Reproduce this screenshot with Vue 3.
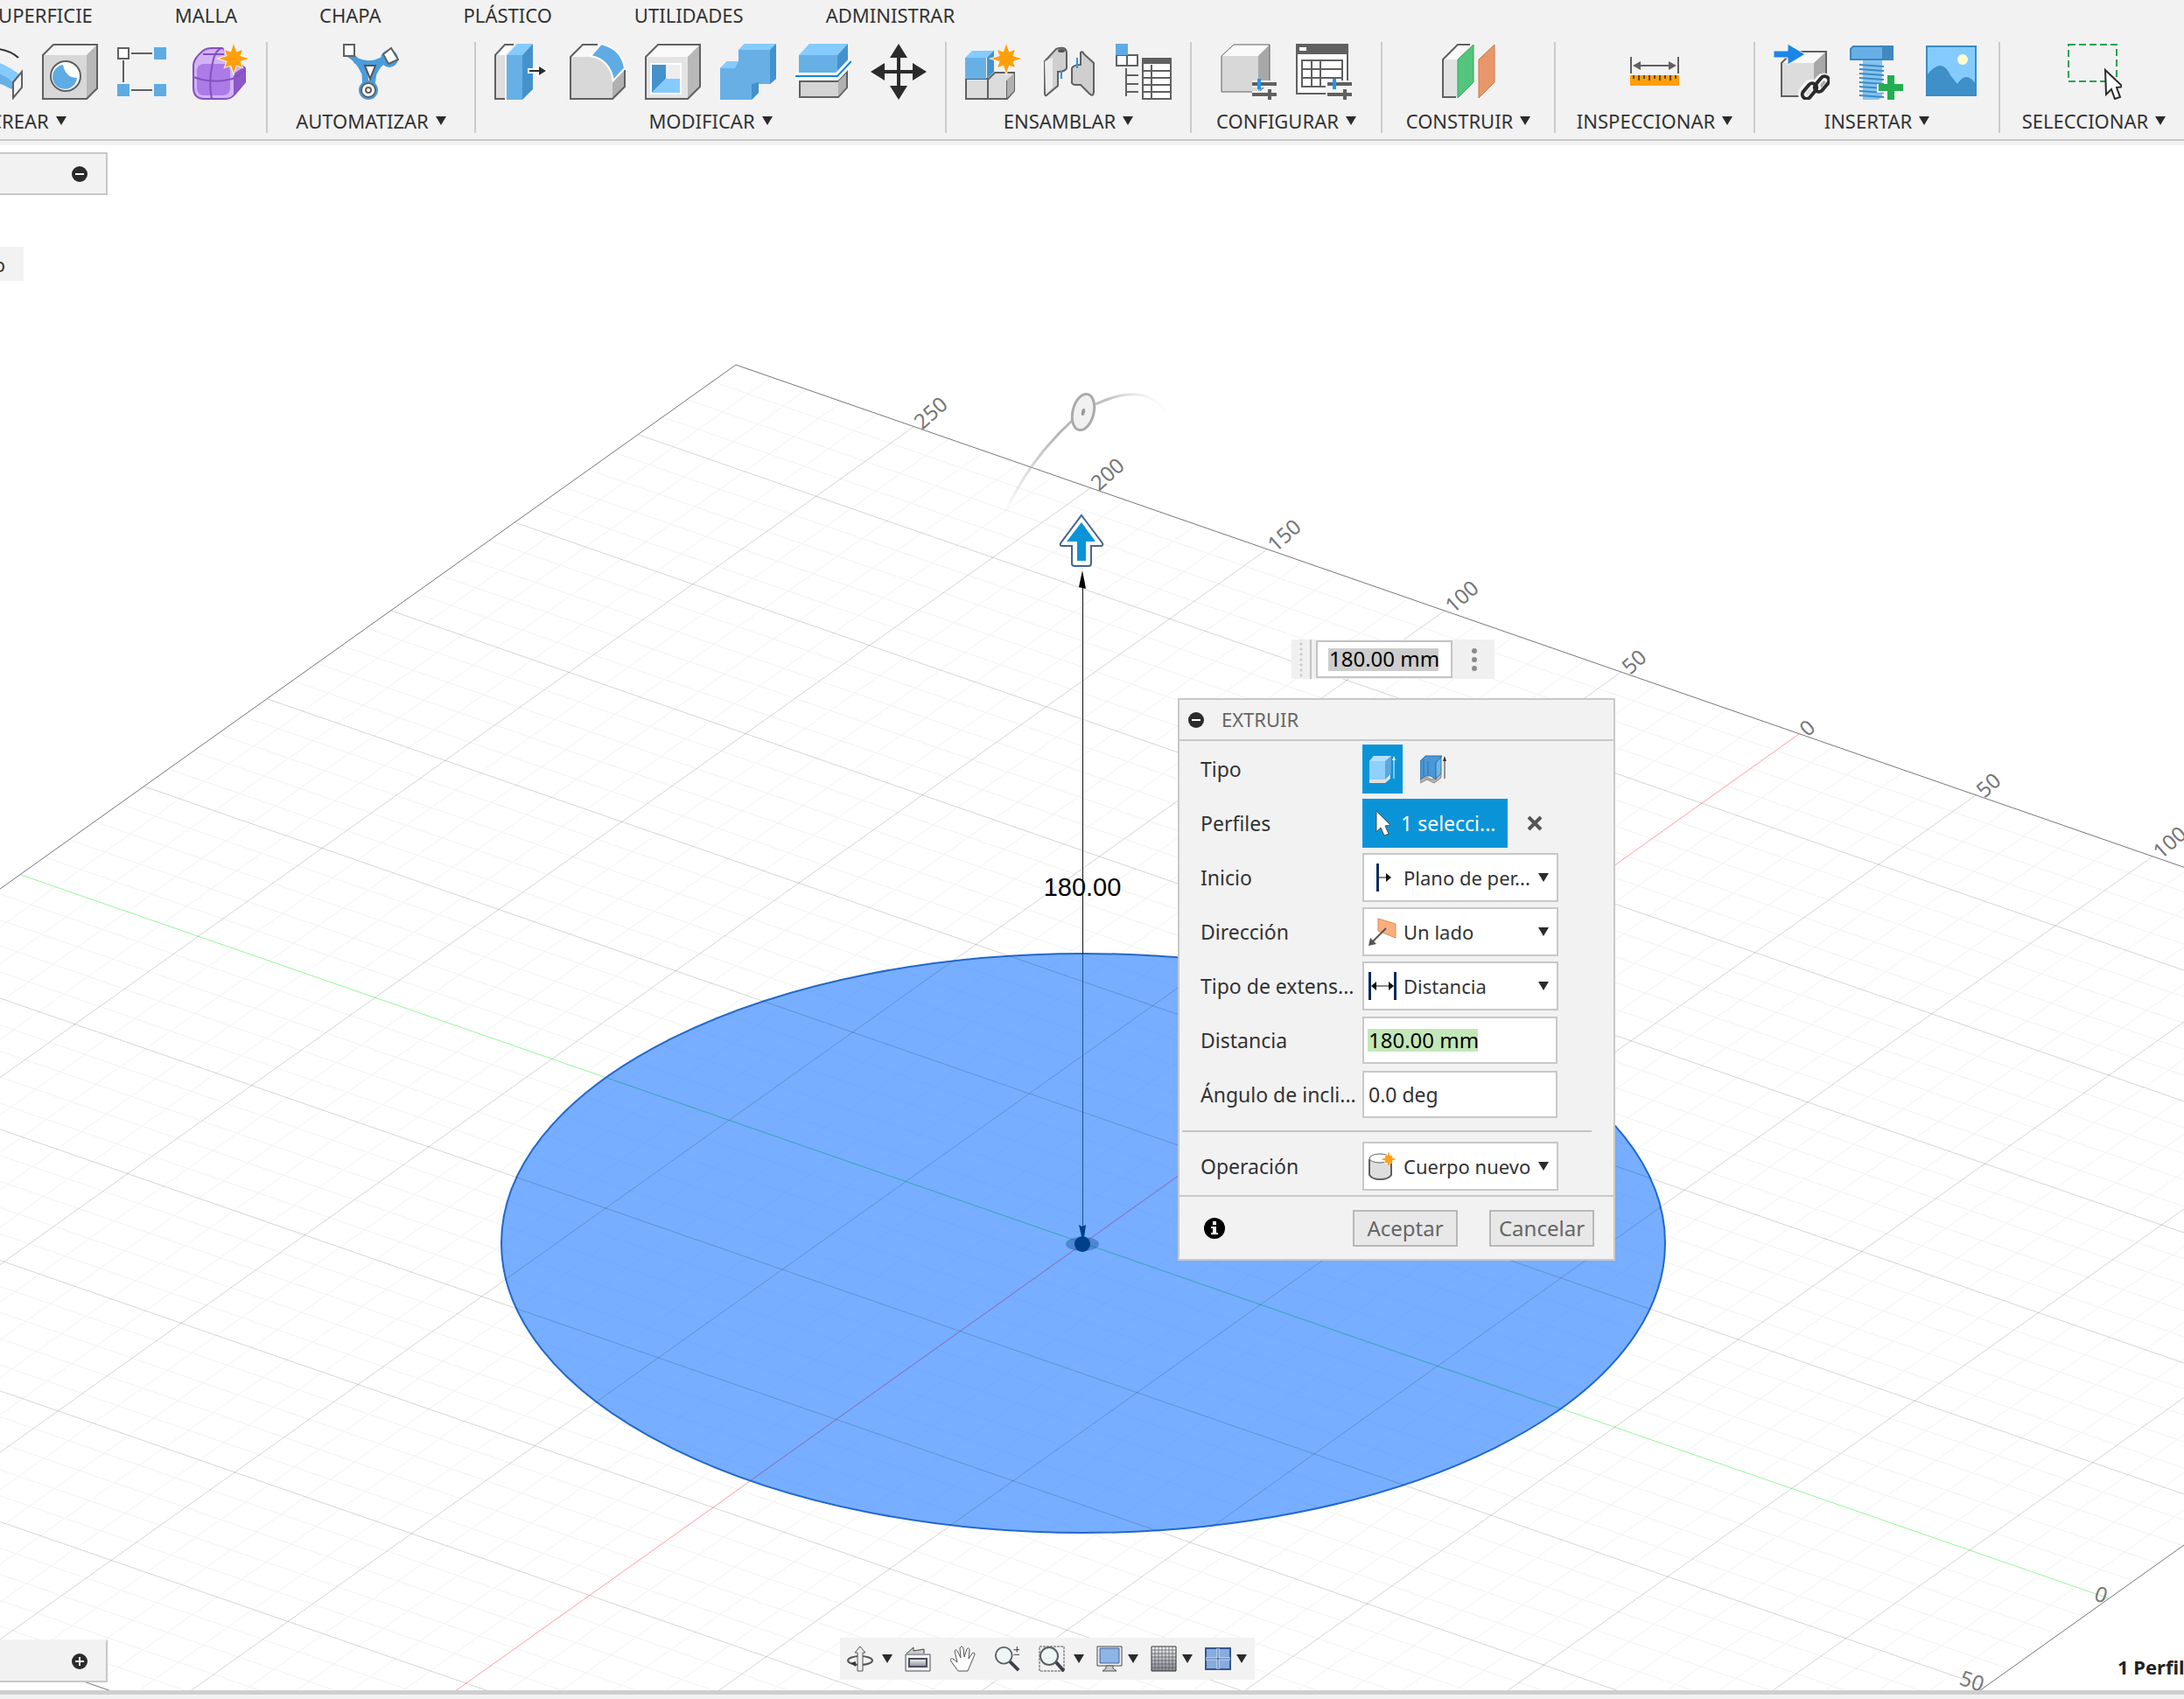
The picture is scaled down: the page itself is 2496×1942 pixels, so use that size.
<template>
    <div class="app">
        <svg class="sprites" aria-hidden="true">
            <defs>
                <linearGradient id="arcFade" gradientUnits="userSpaceOnUse" x1="1147" y1="420" x2="1334" y2="300">
                    <stop offset="0" stop-color="#bbb" stop-opacity="0" />
                    <stop offset="0.45" stop-color="#b4b4b4" />
                    <stop offset="0.75" stop-color="#c0c0c0" />
                    <stop offset="1" stop-color="#ccc" stop-opacity="0" />
                </linearGradient>
                <linearGradient id="steel" x1="0" y1="0" x2="0" y2="1">
                    <stop offset="0" stop-color="#f4f5f8" />
                    <stop offset="1" stop-color="#888c99" />
                </linearGradient>
            </defs>

            <symbol id="i-revolve" viewBox="0 0 64 64">
                <path d="M20 20Q40 18 63 38L51 52Q36 42 20 44Z" fill="#67b0e6" />
                <path d="M20 20Q40 18 63 38L54 45Q40 32 20 30Z" fill="#85cbff" />
                <path d="M36 6Q50 8 59 16" fill="none" stroke="#333" stroke-width="2" />
                <path d="M53 44L63 32V50L53 62Z" fill="#f4f4f4" stroke="#606060" stroke-width="2" />
            </symbol>
            <symbol id="i-hole" viewBox="0 0 64 64">
                <path d="M1 13L13 1H63V51L51 63H1Z" fill="#d8d8d8" />
                <path d="M1 13L13 1H63L51 13Z" fill="#f6f6f6" />
                <path d="M51 13L63 1V51L51 63Z" fill="#b8b8b8" />
                <path d="M1 13L13 1H63V51L51 63H1Z" fill="none" stroke="#606060" stroke-width="2" />
                <circle cx="27" cy="37" r="17" fill="#fff" stroke="#606060" stroke-width="2" />
                <path d="M24 24A14 14 0 1 0 40 39Q27 39 24 24Z" fill="#5fabe4" />
            </symbol>
            <symbol id="i-pattern" viewBox="0 0 64 64">
                <path d="M16 11H40M7 19V44M16 53H40" stroke="#606060" stroke-width="2" />
                <rect x="1" y="5" width="12" height="12" fill="#fff" stroke="#606060" stroke-width="2" />
                <path d="M42 4H56V18H42ZM0 46H14V60H0ZM42 46H56V60H42Z" fill="#5fabe4" />
            </symbol>
            <symbol id="i-form" viewBox="0 0 64 64">
                <path d="M1 24Q2 16 12 8Q16 5 22 5H34L60 28V44L48 58Q44 63 38 63H12Q1 62 1 50Z" fill="#d2b2f7" stroke="#8450c0" stroke-width="2" />
                <path d="M47 34L60 26V44L47 58Z" fill="#8c58c8" />
                <rect x="5" y="23" width="38" height="36" rx="8" fill="#ac7be8" />
                <path d="M22 63Q18 44 23 22Q25 8 33 5M1 38Q22 46 46 40L60 30M12 12H36" fill="none" stroke="#8450c0" stroke-width="2" />
                <polygon :points="star(47, 17, 17, 8)" fill="#ff9f0a" stroke="#f5f5f5" stroke-width="2" paint-order="stroke" />
            </symbol>
            <symbol id="i-automate" viewBox="0 0 64 64">
                <path d="M5 11Q18 18 25 34L26 52M53 15Q40 22 35 34L32 52M14 19Q30 27 46 18" fill="none" stroke="#4a9cdc" stroke-width="7" />
                <path d="M25 25H37L31 40Z" fill="#fff" stroke="#555" stroke-width="2" />
                <circle cx="53" cy="17" r="10" fill="#4a9cdc" />
                <path d="M1 1H13V14H1ZM46 12L55 5L63 18L52 23Z" fill="#fff" stroke="#606060" stroke-width="2" />
                <circle cx="29" cy="53" r="11" fill="#4a9cdc" />
                <circle cx="29" cy="53" r="8" fill="#fff" stroke="#606060" stroke-width="2" />
                <circle cx="29" cy="53" r="3" fill="#fff" stroke="#606060" stroke-width="2" />
            </symbol>
            <symbol id="i-press" viewBox="0 0 64 64">
                <path d="M1 13L12 1H22L12 13V63H1Z" fill="#ddd" />
                <path d="M1 13L12 1H22L12 13Z" fill="#fff" />
                <path d="M22 1H12L1 13V63H12" fill="none" stroke="#606060" stroke-width="2" />
                <path d="M14 13H32V64H14Z" fill="#67b0e6" />
                <path d="M14 13L26 0H44L32 13Z" fill="#85cbff" />
                <path d="M32 13L44 0V52L32 64Z" fill="#4492cc" />
                <path d="M38 28H49V24L62 31L49 38V34H38Z" fill="#fff" />
                <path d="M40 30H51V26L59 31L51 36V32H40Z" fill="#2b2b2b" />
            </symbol>
            <symbol id="i-fillet" viewBox="0 0 64 64">
                <path d="M1 15L15 1H34L24 15Z" fill="#f8f8f8" />
                <path d="M1 15H24Q48 18 49 46V63H1Z" fill="#d8d8d8" />
                <path d="M49 44L63 30V49L49 63Z" fill="#b0b0b0" />
                <path d="M32 1H15L1 15V63H49L63 49V30" fill="none" stroke="#606060" stroke-width="2" />
                <path d="M24 14L36 0Q60 6 63 28L50 42Q46 18 24 14Z" fill="#5fabe4" stroke="#fff" stroke-width="2" />
            </symbol>
            <symbol id="i-shell" viewBox="0 0 64 64">
                <path d="M1 15L15 1H63V49L49 63H1Z" fill="#e4e4e4" />
                <path d="M1 15L15 1H63L49 15Z" fill="#fafafa" />
                <path d="M49 15L63 1V49L49 63Z" fill="#b8b8b8" />
                <path d="M1 15L15 1H63V49L49 63H1Z" fill="none" stroke="#606060" stroke-width="2" />
                <path d="M6 22H42V58H6Z" fill="#fff" />
                <path d="M24 24H40V40H24Z" fill="#eee" />
                <path d="M8 24H24V40L8 56Z" fill="#4492cc" />
                <path d="M24 40H40V56H8Z" fill="#85cbff" />
            </symbol>
            <symbol id="i-combine" viewBox="0 0 64 64">
                <path d="M0 28L8 20H21V7L28 0H64V40L57 46H44V56L36 64H0Z" fill="#67b0e6" />
                <path d="M0 28L8 20H21L17 28ZM21 7L28 0H64L57 7Z" fill="#85cbff" />
                <path d="M57 7L64 0V40L57 46ZM36 46L44 44V56L36 64Z" fill="#4492cc" />
            </symbol>
            <symbol id="i-split" viewBox="0 0 64 64">
                <path d="M4 13H48V34H4Z" fill="#67b0e6" />
                <path d="M4 13L16 0H60L48 13Z" fill="#85cbff" />
                <path d="M48 13L60 0V20L48 34Z" fill="#4492cc" />
                <path d="M5 43H49L59 32V50L49 61H5Z" fill="#d4d4d4" stroke="#606060" stroke-width="2" />
                <path d="M49 43L58 34V50L49 60Z" fill="#b0b0b0" />
                <path d="M0 37H48L64 20" fill="none" stroke="#fff" stroke-width="8" />
                <path d="M0 37H48L64 20" fill="none" stroke="#0f84e0" stroke-width="2" />
            </symbol>
            <symbol id="i-move" viewBox="0 0 64 64">
                <path d="M32 0L42 16H34V30H48V22L64 32L48 42V34H34V48H42L32 64L22 48H30V34H16V42L0 32L16 22V30H30V16H22Z" fill="#2b2b2b" />
            </symbol>
            <symbol id="i-component" viewBox="0 0 64 64">
                <path d="M1 40H27L34 33H56V54L48 63H1Z" fill="#dcdcdc" stroke="#606060" stroke-width="2" />
                <path d="M26 40V63M48 42V62" stroke="#606060" stroke-width="2" />
                <path d="M48 41L56 34V54L48 62Z" fill="#b0b0b0" />
                <path d="M0 16H24V40H0Z" fill="#67b0e6" />
                <path d="M0 16L8 8H34L26 16Z" fill="#85cbff" />
                <path d="M25 16L33 8V32L25 40Z" fill="#4492cc" />
                <polygon :points="star(47, 17, 17, 8)" fill="#ff9f0a" stroke="#f5f5f5" stroke-width="2" paint-order="stroke" />
            </symbol>
            <symbol id="i-joint" viewBox="0 0 64 64">
                <path d="M5 20L18 6Q29 2 30 10V28Q28 32 20 32V48L7 59Q5 60 5 56Z" fill="#cfcfcf" stroke="#606060" stroke-width="2" />
                <path d="M5 20L14 16V50L6 58Z" fill="#ededed" />
                <ellipse cx="24" cy="8" rx="4" ry="2" fill="#555" />
                <path d="M46 10Q48 8 50 12L61 22V56Q60 61 56 57L46 47H39Q35 46 36 42V28Q38 24 46 24Z" fill="#cfcfcf" stroke="#606060" stroke-width="2" />
                <path d="M24 31V40M42 16V28" stroke="#2196f3" stroke-width="2" />
            </symbol>
            <symbol id="i-bom" viewBox="0 0 64 64">
                <path d="M1 13H25V25H1ZM13 13V25M12 28V60M12 36H26M12 46H26M12 55H26" fill="#fff" stroke="#606060" stroke-width="2" />
                <path d="M0 0H14V13H0Z" fill="#5fabe4" />
                <path d="M31 17H63V63H31Z" fill="#fff" stroke="#606060" stroke-width="2" />
                <path d="M31 17H63V23H31Z" fill="#606060" />
                <path d="M31 31H63M31 39H63M31 47H63M31 55H63M41 24V63" stroke="#606060" stroke-width="2" />
            </symbol>
            <symbol id="i-config" viewBox="0 0 64 64">
                <path d="M1 14L15 1H56V44L44 55H1Z" fill="#d8d8d8" />
                <path d="M1 14L15 1H56L43 14Z" fill="#fafafa" />
                <path d="M43 14L56 1V44L43 55Z" fill="#a8a8a8" />
                <path d="M1 14L15 1H56V44L44 55H1Z" fill="none" stroke="#606060" stroke-width="1" />
                <path d="M36 46H64M36 58H64" stroke="#f4f4f4" stroke-width="8" />
                <path d="M36 46H64M36 58H64M56 52V64" stroke="#606060" stroke-width="4" />
                <path d="M44 40V52" stroke="#2196f3" stroke-width="4" />
            </symbol>
            <symbol id="i-config-table" viewBox="0 0 64 64">
                <path d="M1 1H59V57H1Z" fill="#fff" stroke="#606060" stroke-width="2" />
                <path d="M0 0H60V12H0Z" fill="#606060" />
                <path d="M4 4H12V8H4Z" fill="#fff" />
                <path d="M7 19H53V49H7ZM7 29H53M7 39H53M18 19V49M28 19V49" fill="none" stroke="#606060" stroke-width="2" />
                <path d="M34 42H64V62H34Z" fill="#f4f4f4" />
                <path d="M36 46H64M36 58H64M56 52V64" stroke="#606060" stroke-width="4" />
                <path d="M44 40V52" stroke="#2196f3" stroke-width="4" />
            </symbol>
            <symbol id="i-plane" viewBox="0 0 64 64">
                <path d="M3 18L20 1H34L20 18V61H3Z" fill="#e2e2e2" />
                <path d="M3 18L20 1H34L20 18Z" fill="#fafafa" />
                <path d="M34 1H20L3 18V61H18" fill="none" stroke="#606060" stroke-width="2" />
                <path d="M20 18L38 1V44L20 62Z" fill="#55c47c" stroke="#2fa85a" stroke-width="1" />
                <path d="M44 18L62 1V44L44 62Z" fill="#e8976a" stroke="#d17840" stroke-width="1" />
            </symbol>
            <symbol id="i-measure" viewBox="0 0 64 64">
                <path d="M5 15V34M59 15V34M10 25H54" stroke="#606060" stroke-width="2" />
                <path d="M7 25L16 20V30ZM57 25L48 20V30Z" fill="#606060" />
                <path d="M4 36H60V48H4Z" fill="#ff9f0a" />
                <path d="M8 36V40M14 36V42M20 36V40M26 36V42M32 36V40M38 36V42M44 36V40M50 36V42M56 36V40" stroke="#5a4630" stroke-width="2" />
            </symbol>
            <symbol id="i-derive" viewBox="0 0 64 64">
                <path d="M9 22L22 9H60V46L46 60H9Z" fill="#dcdcdc" />
                <path d="M9 22L22 9H60L46 22Z" fill="#fafafa" />
                <path d="M46 22L60 9V46L46 60Z" fill="#a8a8a8" />
                <path d="M9 22L22 9H60V46L46 60H9Z" fill="none" stroke="#606060" stroke-width="2" />
                <path d="M0 8H16V0L36 12L16 24V16H0Z" fill="#1a86e8" stroke="#f4f4f4" stroke-width="1" />
                <g fill="none" stroke-linecap="round">
                    <rect x="-6" y="-10" width="12" height="20" rx="6" transform="translate(55 47) rotate(40)" stroke="#f4f4f4" stroke-width="9" />
                    <rect x="-6" y="-10" width="12" height="20" rx="6" transform="translate(41 54) rotate(40)" stroke="#f4f4f4" stroke-width="9" />
                    <rect x="-5" y="-10" width="10" height="20" rx="5" transform="translate(55 46) rotate(40)" stroke="#2b2b2b" stroke-width="4" />
                    <rect x="-5" y="-10" width="10" height="20" rx="5" transform="translate(41 54) rotate(40)" stroke="#2b2b2b" stroke-width="4" />
                </g>
            </symbol>
            <symbol id="i-bolt" viewBox="0 0 64 64">
                <path d="M16 18H38V60L34 64H16Z" fill="#85c4f2" />
                <path d="M5 3H50V18H2V6Z" fill="#67b0e6" stroke="#3a86be" stroke-width="2" />
                <path d="M38 3H50V18H38Z" fill="#3f88c0" />
                <path d="M12 24L40 26M12 29L40 31M12 34L40 36M12 39L40 41M12 44L40 46M12 49L40 51M12 54L40 56M12 59L40 61" stroke="#3f88c0" stroke-width="2" />
                <path d="M40 36H54V46H64V56H54V64H40V56H32V46H40Z" fill="#f4f4f4" />
                <path d="M44 36H52V46H62V54H52V64H44V54H34V46H44Z" fill="#22ad50" />
            </symbol>
            <symbol id="i-picture" viewBox="0 0 64 64">
                <path d="M3 3H59V59H3Z" fill="#85cbff" />
                <circle cx="44" cy="18" r="6" fill="#ffffcf" />
                <path d="M3 36Q20 14 30 36L38 46Q48 30 59 46V59H3Z" fill="#3f8fc8" />
                <path d="M3 3H59V59H3Z" fill="none" stroke="#3a8ac6" stroke-width="2" />
            </symbol>
            <symbol id="i-select" viewBox="0 0 64 64">
                <rect x="3" y="1" width="55" height="42" fill="none" stroke="#1fa64c" stroke-width="2" stroke-dasharray="8 4" />
                <path d="M45 30L65 49L58 50L62 61L56 63L52 52L46 58Z" fill="#fff" stroke="#2b2b2b" stroke-width="2" />
            </symbol>

            <symbol id="n-orbit" viewBox="0 0 30 30">
                <ellipse cx="15" cy="17" rx="14" ry="5" fill="none" stroke="#555" stroke-width="2" />
                <path d="M15 1L21 8H18V29H12V8H9Z" fill="#eee" stroke="#555" />
                <path d="M4 20L10 18V24Z" fill="#333" />
            </symbol>
            <symbol id="n-look" viewBox="0 0 30 30">
                <path d="M2 9L10 2V6L22 4V9" fill="#ccc" stroke="#444" />
                <path d="M1 10H29V29H1Z" fill="#f1f2f6" stroke="#4b4f5c" stroke-width="1" />
                <path d="M5 15H25V24H5Z" fill="url(#steel)" stroke="#4b4f5c" stroke-width="2" />
            </symbol>
            <symbol id="n-pan" viewBox="0 0 30 30">
                <path d="M10 29L2 18Q0 14 4 15L9 19L6 6Q7 3 9 6L13 14L12 3Q14 -1 16 3L17 13L20 4Q22 1 23 5L22 15L26 9Q29 7 29 10L24 22L21 29Z" fill="#fff" stroke="#555" />
            </symbol>
            <symbol id="n-zoom" viewBox="0 0 32 30">
                <path d="M19 18L30 29" stroke="#3c4048" stroke-width="4" />
                <circle cx="12" cy="11" r="10" fill="#eef6f4" stroke="#5b5f66" stroke-width="2" />
                <path d="M24 4H31M28 0V7M24 10H31" stroke="#333" stroke-width="1" />
            </symbol>
            <symbol id="n-fit" viewBox="0 0 30 30">
                <path d="M1 1H29V29H1Z" fill="none" stroke="#555" stroke-dasharray="3 1" />
                <path d="M19 18L29 29" stroke="#3c4048" stroke-width="4" />
                <circle cx="12" cy="12" r="10" fill="#eef6f4" stroke="#5b5f66" stroke-width="2" />
            </symbol>
            <symbol id="n-display" viewBox="0 0 30 30">
                <path d="M1 1H29V23H1Z" fill="#f4f4f6" stroke="#444" stroke-width="1" />
                <path d="M4 3H26V20H4Z" fill="#8fb4e6" stroke="#3f5e96" stroke-width="1" />
                <path d="M11 23H19V26L23 29H7L11 26Z" fill="#ccc" stroke="#555" />
            </symbol>
            <symbol id="n-grid" viewBox="0 0 30 30">
                <path d="M1 1H29V29H1Z" fill="url(#steel)" stroke="#333" />
                <path d="M5 1V29M9 1V29M13 1V29M17 1V29M21 1V29M25 1V29M1 5H29M1 9H29M1 13H29M1 17H29M1 21H29M1 25H29" stroke="#555" stroke-width="1" stroke-opacity="0.7" />
            </symbol>
            <symbol id="n-views" viewBox="0 0 30 30">
                <path d="M1 3H29V27H1Z" fill="#86ace0" stroke="#35568c" stroke-width="2" />
                <path d="M15 3V27M1 15H29" stroke="#dbe8fa" stroke-width="3" />
                <path d="M15 3V27M1 15H29" stroke="#35568c" stroke-width="1" />
            </symbol>

            <symbol id="p-solid" viewBox="0 0 30 34">
                <path d="M0 27H18L24 22V28L18 33H0Z" fill="#e4e0dc" />
                <path d="M0 8L5 2H25L18 8V29H0Z" fill="#8fd0ff" />
                <path d="M18 8L25 2V22L18 29Z" fill="#5aa8e0" />
                <path d="M0 8L5 2H25L18 8Z" fill="#b4e0ff" />
                <path d="M28 5V28" stroke="#fff" stroke-width="1" />
                <path d="M28 2L30 7H26Z" fill="#fff" />
            </symbol>
            <symbol id="p-thin" viewBox="0 0 30 34">
                <path d="M0 29L6 26L14 29L24 22V27L16 33L8 29L0 33Z" fill="#b9b2ac" stroke="#8d8580" />
                <path d="M0 8L6 2H25L18 10V29L12 25H6L0 29Z" fill="#4b98d6" stroke="#2f74ae" />
                <path d="M4 6V25M9 8V24M18 10L24 3V22L18 28Z" fill="#6eb6ec" stroke="#2f74ae" />
                <path d="M28 6V28" stroke="#333" stroke-width="1" />
                <path d="M28 2L30 8H26Z" fill="#333" />
            </symbol>
            <symbol id="p-cursor" viewBox="0 0 20 30">
                <path d="M2 1L18 17L12 18L16 27L11 29L7 20L2 25Z" fill="#fff" stroke="#5b4a48" stroke-width="1" />
            </symbol>
            <symbol id="p-start" viewBox="0 0 32 32">
                <path d="M9 0H12V32H9Z" fill="#0b2a5c" />
                <path d="M12 16H22" stroke="#111" stroke-width="1" />
                <path d="M20 11L26 16L20 21Z" fill="#111" />
            </symbol>
            <symbol id="p-side" viewBox="0 0 32 32">
                <path d="M11 1L31 7V23L11 15Z" fill="#f7b07c" stroke="#dc8c50" stroke-width="1" />
                <path d="M20 12L3 29" stroke="#555" stroke-width="2" />
                <path d="M0 32L2 23L9 30Z" fill="#555" />
            </symbol>
            <symbol id="p-extent" viewBox="0 0 32 32">
                <path d="M0 0H3V32H0ZM29 0H32V32H29Z" fill="#0b2a5c" />
                <path d="M6 16H26" stroke="#111" stroke-width="1" />
                <path d="M3 16L9 11V21ZM29 16L23 11V21Z" fill="#111" />
            </symbol>
            <symbol id="p-body" viewBox="0 0 32 32">
                <path d="M1 8V26Q4 31 13 31Q23 31 26 26V8" fill="#dedede" stroke="#606060" stroke-width="2" />
                <ellipse cx="13" cy="7" rx="12" ry="5" fill="#fff" stroke="#606060" stroke-width="1" />
                <polygon :points="star(23, 8, 9, 4)" fill="#ffa114" stroke="#fff" stroke-width="1" paint-order="stroke" />
            </symbol>
        </svg>

        <header class="toolbar">
            <nav class="tabs">
                <a v-for="tab in tabs" :key="tab" href="#" class="tab">{{ tab }}</a>
            </nav>
            <div class="groups">
                <section v-for="group in groups" :key="group.label" class="group">
                    <div class="group-icons">
                        <button v-for="icon in group.icons" :key="icon" type="button" class="tool" :aria-label="icon">
                            <svg class="tool-icon"><use :href="'#i-' + icon" /></svg>
                        </button>
                    </div>
                    <button type="button" class="group-label">
                        {{ group.label }}
                        <svg class="caret" viewBox="0 0 12 10"><path d="M0 0H12L6 10Z" /></svg>
                    </button>
                </section>
            </div>
        </header>

        <main class="viewport">
            <svg class="scene">
                <path :d="minorLines" class="line-minor" />
                <path :d="segment(0, MIN, 0, MAX)" class="axis-x" />
                <path :d="segment(MIN, 0, MAX, 0)" class="axis-y" />
                <ellipse cx="1238" cy="1255" rx="665" ry="331" class="profile" />
                <path :d="segment(0, -RADIUS, 0, RADIUS)" class="axis-x axis-inner" />
                <path :d="segment(-RADIUS, 0, RADIUS, 0)" class="axis-y axis-inner" />
                <path :d="majorLines" class="line-major" />
                <path :d="border" class="line-border" />
                <text
                    v-for="mark in marks"
                    :key="mark.id"
                    class="mark"
                    :text-anchor="mark.anchor"
                    :transform="`translate(${mark.x} ${mark.y}) rotate(${mark.angle})`"
                >{{ mark.text }}</text>

                <path d="M1147 424Q1174 362 1225 315M1252 296Q1308 270 1332 304" class="arc" stroke="url(#arcFade)" />
                <ellipse rx="12" ry="21" transform="translate(1238 305) rotate(14)" class="ring" />
                <ellipse rx="2" ry="4" transform="translate(1238 305) rotate(14)" class="ring-dot" />

                <path d="M1237.5 500V924" class="dim-line" />
                <path d="M1237.5 924V1240" class="dim-line-inner" />
                <path d="M1237 486L1241 507L1233 505Z" />
                <text x="1237" y="858" class="dim-text">180.00</text>
                <ellipse cx="1237" cy="1256" rx="19" ry="8" class="origin-halo" />
                <path d="M1233 1234L1237 1236L1241 1234L1238 1256Z" class="origin" />
                <circle cx="1237" cy="1256" r="9" class="origin" />
                <path d="M1236 423L1260 455Q1261 458 1258 458H1247V478Q1247 481 1244 481H1228Q1225 481 1225 478V458H1214Q1211 458 1212 455Z" class="handle" />
                <path d="M1236 431L1252 453H1241V475H1231V453H1219Z" class="handle-fill" />
            </svg>

            <div class="dock dock-top">
                <button type="button" class="round" aria-label="Contraer">
                    <svg viewBox="0 0 18 18"><circle cx="9" cy="9" r="9" /><path d="M4 9H14" /></svg>
                </button>
            </div>
            <div class="chip">o</div>

            <form class="quick" @submit.prevent>
                <span class="grip"></span>
                <input v-model="distance" class="quick-input" aria-label="Distancia rápida">
                <button type="button" class="dots" aria-label="Más">
                    <svg viewBox="0 0 6 26"><circle cx="3" cy="3" r="3" /><circle cx="3" cy="13" r="3" /><circle cx="3" cy="23" r="3" /></svg>
                </button>
            </form>

            <form class="panel" @submit.prevent>
                <div class="panel-head">
                    <button type="button" class="round" aria-label="Contraer panel">
                        <svg viewBox="0 0 18 18"><circle cx="9" cy="9" r="9" /><path d="M4 9H14" /></svg>
                    </button>
                    <h2>EXTRUIR</h2>
                </div>
                <div class="panel-body">
                    <div class="row">
                        <span class="row-label">Tipo</span>
                        <div class="types">
                            <button type="button" class="type type-on" aria-label="Sólido"><svg><use href="#p-solid" /></svg></button>
                            <button type="button" class="type" aria-label="Fino"><svg><use href="#p-thin" /></svg></button>
                        </div>
                    </div>
                    <div class="row">
                        <span class="row-label">Perfiles</span>
                        <button type="button" class="pick"><svg><use href="#p-cursor" /></svg>1 selecci...</button>
                        <button type="button" class="clear" aria-label="Borrar">
                            <svg viewBox="0 0 18 18"><path d="M2 2L16 16M16 2L2 16" /></svg>
                        </button>
                    </div>
                    <div v-for="field in selects" :key="field.id" class="row">
                        <label class="row-label" :for="field.id">{{ field.label }}</label>
                        <div class="combo">
                            <svg class="combo-icon"><use :href="'#p-' + field.icon" /></svg>
                            <select :id="field.id"><option>{{ field.value }}</option></select>
                            <svg class="caret" viewBox="0 0 12 10"><path d="M0 0H12L6 10Z" /></svg>
                        </div>
                    </div>
                    <div class="row">
                        <label class="row-label" for="distance">Distancia</label>
                        <input id="distance" v-model="distance" class="field field-marked">
                    </div>
                    <div class="row">
                        <label class="row-label" for="angle">Ángulo de incli...</label>
                        <input id="angle" v-model="angle" class="field">
                    </div>
                    <hr>
                    <div class="row">
                        <label class="row-label" for="operation">Operación</label>
                        <div class="combo">
                            <svg class="combo-icon"><use href="#p-body" /></svg>
                            <select id="operation"><option>Cuerpo nuevo</option></select>
                            <svg class="caret" viewBox="0 0 12 10"><path d="M0 0H12L6 10Z" /></svg>
                        </div>
                    </div>
                </div>
                <div class="panel-foot">
                    <button type="button" class="info" aria-label="Información">
                        <svg viewBox="0 0 24 24"><circle cx="12" cy="12" r="12" /><path d="M10 4H14V8H10ZM8 10H14V17H16V19H8V17H10V12H8Z" /></svg>
                    </button>
                    <button type="submit" class="action">Aceptar</button>
                    <button type="button" class="action">Cancelar</button>
                </div>
            </form>

            <div class="dock dock-bottom">
                <button type="button" class="round" aria-label="Expandir">
                    <svg viewBox="0 0 18 18"><circle cx="9" cy="9" r="9" /><path d="M4 9H14M9 4V14" /></svg>
                </button>
            </div>
            <nav class="navbar">
                <button v-for="item in navItems" :key="item.icon" type="button" class="nav-item" :aria-label="item.icon">
                    <svg class="nav-icon"><use :href="'#n-' + item.icon" /></svg>
                    <svg v-if="item.menu" class="caret" viewBox="0 0 12 10"><path d="M0 0H12L6 10Z" /></svg>
                </button>
            </nav>
            <div class="status">1 Perfil | Área</div>
        </main>
        <footer class="timeline"></footer>
    </div>
</template>

<script setup>
import { ref } from 'vue';

const distance = ref('180.00 mm');
const angle = ref('0.0 deg');

const tabs = ['SUPERFICIE', 'MALLA', 'CHAPA', 'PLÁSTICO', 'UTILIDADES', 'ADMINISTRAR'];

const groups = [
    { label: 'CREAR', icons: ['revolve', 'hole', 'pattern', 'form'] },
    { label: 'AUTOMATIZAR', icons: ['automate'] },
    { label: 'MODIFICAR', icons: ['press', 'fillet', 'shell', 'combine', 'split', 'move'] },
    { label: 'ENSAMBLAR', icons: ['component', 'joint', 'bom'] },
    { label: 'CONFIGURAR', icons: ['config', 'config-table'] },
    { label: 'CONSTRUIR', icons: ['plane'] },
    { label: 'INSPECCIONAR', icons: ['measure'] },
    { label: 'INSERTAR', icons: ['derive', 'bolt', 'picture'] },
    { label: 'SELECCIONAR', icons: ['select'] }
];

const selects = [
    { id: 'start', label: 'Inicio', icon: 'start', value: 'Plano de per...' },
    { id: 'direction', label: 'Dirección', icon: 'side', value: 'Un lado' },
    { id: 'extent', label: 'Tipo de extens...', icon: 'extent', value: 'Distancia' }
];

const navItems = [
    { icon: 'orbit', menu: true },
    { icon: 'look' },
    { icon: 'pan' },
    { icon: 'zoom' },
    { icon: 'fit', menu: true },
    { icon: 'display', menu: true },
    { icon: 'grid', menu: true },
    { icon: 'views', menu: true }
];

// Orthographic work plane: one unit is 50 mm
const MIN = -6;
const MAX = 5.79;
const RADIUS = 2.69;
const project = (u, v) => [
    Math.round(1238 + u * 202.4 + v * 141.2),
    Math.round(1255 + u * 70.2 - v * 100.6)
];
const segment = (u1, v1, u2, v2) => `M${project(u1, v1)}L${project(u2, v2)}`;

const gridLines = (keep) => {
    let d = '';
    for (let i = -30; i < 29; i++) {
        if (!keep(i)) continue;
        d += segment(i / 5, MIN, i / 5, MAX) + segment(MIN, i / 5, MAX, i / 5);
    }
    return d;
};
const minorLines = gridLines((i) => i % 5 !== 0);
const majorLines = gridLines((i) => i % 5 === 0 && i !== 0 && i !== -30);
const border = `M${project(MIN, MIN)}L${project(MIN, MAX)}L${project(MAX, MAX)}L${project(MAX, MIN)}Z`;

const marks = [];
for (let u = -5; u <= 2; u++) {
    const [x, y] = project(u, MAX);
    marks.push({ id: `u${u}`, text: Math.abs(u * 50), x: x + 10, y: y + 4, angle: -42, anchor: 'start' });
}
for (let v = 0; v >= -1; v--) {
    const [x, y] = project(MAX, v);
    marks.push({ id: `v${v}`, text: Math.abs(v * 50), x: x - 5, y: y + 6, angle: 19, anchor: 'end' });
}

function star(cx, cy, outer, inner) {
    const points = [];
    for (let i = 0; i < 16; i++) {
        const r = i % 2 ? inner : i % 4 ? outer - 3 : outer;
        const a = (i * Math.PI) / 8;
        points.push(`${(cx + r * Math.sin(a)).toFixed(1)},${(cy - r * Math.cos(a)).toFixed(1)}`);
    }
    return points.join(' ');
}
</script>

<style>
body {
    margin: 0;
}
</style>

<style scoped>
.app {
    display: flex;
    flex-direction: column;
    min-height: 100vh;
    overflow: hidden;
    background: #fff;
    color: #333;
    font-family: "Noto Sans", "Open Sans", sans-serif;
    font-size: 22px;
    line-height: 30px;
}
.sprites {
    position: absolute;
    width: 0;
    height: 0;
}
button,
input,
select {
    margin: 0;
    padding: 0;
    border: none;
    border-radius: 0;
    background: none;
    color: inherit;
    font: inherit;
}
.caret {
    flex: none;
    width: 12px;
    height: 10px;
    fill: #2b2b2b;
}

/* toolbar */
.toolbar {
    height: 166px;
    overflow: hidden;
    background: #f2f2f2;
}
.tabs {
    display: flex;
    gap: 94px;
    margin-left: -14px;
    padding-top: 2px;
}
.tab {
    color: #333;
    text-decoration: none;
    white-space: nowrap;
}
.groups {
    display: grid;
    grid-template-columns: 546px 238px 538px 280px 218px 198px 228px 280px 1fr;
    margin-left: -240px;
    padding: 16px 0 7px;
    border-bottom: 2px solid #c8c8c8;
}
.group {
    display: flex;
    flex-direction: column;
    align-items: center;
    box-sizing: border-box;
    height: 104px;
    border-right: 2px solid #cbcbcb;
}
.group:last-child {
    padding-left: 4px;
    border-right: none;
}
.group-icons {
    display: flex;
    justify-content: center;
    gap: 22px;
    padding-top: 2px;
}
.group:first-child .group-icons {
    align-self: flex-end;
    padding-right: 20px;
}
.tool,
.tool-icon {
    display: block;
    width: 64px;
    height: 64px;
    overflow: visible;
}
.group-label {
    display: flex;
    align-items: center;
    gap: 8px;
    height: 30px;
    margin-top: 9px;
    white-space: nowrap;
}

/* scene */
.viewport {
    position: relative;
    flex: 1;
    min-height: 1500px;
    border-bottom: 5px solid #cfcfcf;
    overflow: hidden;
}
.scene {
    position: absolute;
    inset: 0;
    width: 100%;
    height: 100%;
}
.scene path {
    stroke-width: 1px;
}
.line-minor {
    fill: none;
    stroke: #f2f2f2;
}
.line-major {
    fill: none;
    stroke: rgba(0, 0, 0, 0.17);
}
.line-border {
    fill: none;
    stroke: #777;
}
.axis-x {
    stroke: #ff9ca4;
}
.axis-y {
    stroke: #92f79c;
}
.axis-inner {
    stroke-opacity: 0.4;
}
.axis-x.axis-inner {
    stroke: #a0408c;
}
.axis-y.axis-inner {
    stroke: #1c9c8c;
}
.mark {
    fill: #777;
    font-size: 24px;
}
.profile {
    fill: rgba(46, 131, 255, 0.65);
    stroke: #2268cc;
    stroke-width: 2px;
}
.scene .arc {
    fill: none;
    stroke-width: 3px;
}
.ring {
    fill: #f1f1f1;
    stroke: #aaa;
    stroke-width: 3px;
}
.ring-dot {
    fill: #999;
}
.dim-line {
    stroke: #111;
}
.dim-line-inner {
    stroke: #1b4f9c;
}
.dim-text {
    fill: #000;
    font-family: "Liberation Sans", Arial, sans-serif;
    font-size: 29px;
    text-anchor: middle;
}
.origin-halo {
    fill: rgba(0, 60, 140, 0.35);
}
.origin {
    fill: #003f8c;
}
.scene .handle {
    fill: #fff;
    stroke: #44658f;
    stroke-width: 2px;
}
.handle-fill {
    fill: #0a94d8;
}

/* docked strips */
.dock {
    position: absolute;
    left: 0;
    display: flex;
    align-items: center;
    justify-content: flex-end;
    box-sizing: border-box;
    width: 123px;
    height: 49px;
    padding-right: 21px;
    border: 2px solid #c8c8c8;
    border-left: none;
    background: #f2f2f2;
}
.dock-top {
    top: 8px;
}
.dock-bottom {
    bottom: 9px;
    border-top-color: #f2f2f2;
}
.round,
.round svg {
    display: block;
    width: 18px;
    height: 18px;
}
.round circle {
    fill: #2b2b2b;
}
.round path {
    stroke: #fff;
    stroke-width: 2px;
}
.chip {
    position: absolute;
    top: 116px;
    left: 0;
    display: flex;
    align-items: center;
    justify-content: flex-end;
    box-sizing: border-box;
    width: 27px;
    height: 39px;
    padding-right: 21px;
    overflow: hidden;
    background: #f2f2f2;
}

/* floating value box */
.quick {
    position: absolute;
    top: 565px;
    left: 1476px;
    display: flex;
    align-items: center;
    width: 232px;
    height: 45px;
    background: #f0f0f0;
}
.grip {
    box-sizing: border-box;
    width: 23px;
    height: 45px;
    border-right: 2px solid #c4c4c4;
    background: radial-gradient(circle, #ccc 1px, transparent 2px) 8px 2px / 6px 6px no-repeat;
    background-repeat: repeat-y;
}
.quick-input {
    box-sizing: border-box;
    width: 156px;
    height: 43px;
    margin-left: 5px;
    padding: 0 0 2px 13px;
    border: 2px solid #c4c4c4;
    background: #fff linear-gradient(#cdcdcd, #cdcdcd) 12px center / 126px 26px no-repeat;
    color: #000;
    font-size: 24px;
}
.dots {
    margin-left: 22px;
}
.dots svg {
    display: block;
    width: 6px;
    height: 26px;
    fill: #8c8c8c;
}

/* extrude panel */
.panel {
    position: absolute;
    top: 632px;
    left: 1346px;
    box-sizing: border-box;
    width: 500px;
    border: 2px solid #c8c8c8;
    background: #f2f2f2;
    font-size: 23px;
}
.panel-head {
    display: flex;
    align-items: center;
    gap: 20px;
    height: 45px;
    padding-left: 10px;
    border-bottom: 2px solid #c8c8c8;
}
.panel-head h2 {
    margin: 0;
    padding-bottom: 2px;
    color: #666;
    font-size: 22px;
    font-weight: 400;
}
.panel-body {
    display: flex;
    flex-direction: column;
    gap: 6px;
    padding: 4px 0 5px;
}
.row {
    display: flex;
    align-items: center;
    height: 56px;
    padding-left: 24px;
}
.row-label {
    flex: none;
    width: 185px;
    white-space: nowrap;
}
.types {
    display: flex;
    gap: 12px;
}
.type {
    display: flex;
    align-items: center;
    justify-content: center;
    width: 46px;
    height: 56px;
}
.type-on {
    background: #0a94d8;
}
.type svg {
    width: 30px;
    height: 34px;
}
.pick {
    display: flex;
    align-items: center;
    gap: 10px;
    box-sizing: border-box;
    width: 166px;
    height: 56px;
    padding-left: 14px;
    background: #0a94d8;
    color: #fff;
    white-space: nowrap;
}
.pick svg {
    width: 20px;
    height: 30px;
}
.clear {
    margin-left: 22px;
}
.clear svg {
    display: block;
    width: 18px;
    height: 18px;
    stroke: #555;
    stroke-width: 4px;
}
.combo {
    display: flex;
    align-items: center;
    box-sizing: border-box;
    width: 224px;
    height: 56px;
    padding: 0 9px 0 5px;
    border: 2px solid #c8c8c8;
    background: #fff;
    font-size: 22px;
}
.combo-icon {
    flex: none;
    width: 32px;
    height: 32px;
}
.combo select {
    flex: 1;
    min-width: 0;
    height: 40px;
    margin-left: 8px;
    appearance: none;
}
.field {
    box-sizing: border-box;
    width: 223px;
    height: 54px;
    padding-left: 5px;
    border: 2px solid #c8c8c8;
    background: #fff;
}
.field-marked {
    padding-bottom: 2px;
    background: #fff linear-gradient(#c3e8b8, #c3e8b8) 4px center / 126px 26px no-repeat;
    color: #000;
    font-size: 24px;
}
hr {
    width: 468px;
    height: 2px;
    margin: 7px 0 5px 3px;
    border: none;
    background: #c4c4c4;
}
.panel-foot {
    display: flex;
    align-items: center;
    height: 71px;
    padding-left: 28px;
    border-top: 2px solid #c8c8c8;
}
.info {
    margin-right: 146px;
}
.info svg {
    display: block;
    width: 24px;
    height: 24px;
}
.info path {
    fill: #fff;
}
.action {
    box-sizing: border-box;
    width: 120px;
    height: 42px;
    border: 2px solid #b8b8b8;
    background: #e8e8e8;
    color: #666;
    font-size: 24px;
}
.action + .action {
    margin-left: 36px;
}

/* navigation bar */
.navbar {
    position: absolute;
    bottom: 12px;
    left: 960px;
    display: flex;
    align-items: center;
    gap: 14px;
    box-sizing: border-box;
    width: 474px;
    height: 48px;
    padding-left: 8px;
    background: #f2f2f2;
}
.nav-item {
    display: flex;
    align-items: center;
    gap: 6px;
}
.nav-item:nth-child(-n + 4) {
    margin-right: 7px;
}
.nav-item:first-child {
    gap: 10px;
    margin-right: 0;
}
.nav-item:nth-child(5) {
    gap: 10px;
}
.nav-icon {
    display: block;
    width: 30px;
    height: 30px;
}
.status {
    position: absolute;
    bottom: 12px;
    left: calc(100% - 76px);
    color: #222;
    font-weight: 700;
    white-space: nowrap;
}
.timeline {
    height: 5px;
    background: #f2f2f2;
}
</style>
